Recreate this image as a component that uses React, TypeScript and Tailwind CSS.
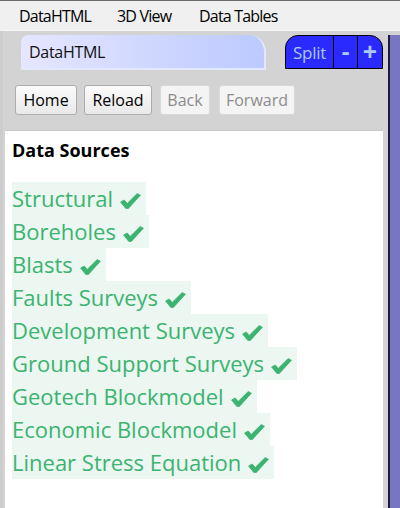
const sources = [
  'Structural',
  'Boreholes',
  'Blasts',
  'Faults Surveys',
  'Development Surveys',
  'Ground Support Surveys',
  'Geotech Blockmodel',
  'Economic Blockmodel',
  'Linear Stress Equation',
];

const font = { fontFamily: '"Open Sans", "Noto Sans", sans-serif' };

const NavButton = ({ label, width, disabled }: { label: string; width: string; disabled?: boolean }) => (
  <button
    className={`${width} h-[30px] rounded-[3px] border text-[16px] leading-none ${
      disabled
        ? 'border-[#d9d9d9] bg-[#f4f4f4] text-[#8c8c8c]'
        : 'border-[#adadad] bg-gradient-to-b from-[#fbfbfb] to-[#e9e9e9] text-black'
    }`}
  >
    {label}
  </button>
);

// heavy check mark, drawn to match the slanted brush tick in the screenshot
const Tick = () => (
  <svg width="21" height="16" viewBox="0 0 21 16" className="inline-block ml-[7px]">
    <polygon
      points="0.6,9 4.2,7 7.2,10.4 17.2,0.6 20.4,2.2 8.4,15.4 5.8,15.4"
      fill="#3cb371"
      stroke="#3cb371"
      strokeWidth="0.8"
      strokeLinejoin="round"
    />
  </svg>
);

export default function App() {
  return (
    <div className="w-[400px] h-[508px] overflow-hidden flex flex-col bg-[#d3d3d3]" style={font}>
      {/* MENU BAR */}
      <div className="h-[31px] shrink-0 border-t border-[#6b6b6b] border-b border-b-[#f8f8f8] bg-[#f0f0f0] flex items-center text-[16px] text-black tracking-[-0.8px]">
        <span className="ml-[19px] w-[98px]">DataHTML</span>
        <span className="w-[82px]">3D View</span>
        <span>Data Tables</span>
      </div>

      <div className="flex flex-1 min-h-0">
        {/* LEFT PANE */}
        <div className="w-[383px] flex flex-col border-l-[3px] border-[#cdcdcd]">
          {/* TABS */}
          <div className="flex items-end h-[39px] shrink-0">
            <div className="ml-[18px] w-[245px] h-[35px] rounded-tl-[7px] rounded-tr-[17px] bg-gradient-to-r from-[#e6e6ff] to-[#bccaff] border-r-2 border-b-2 border-[#e4e8ff] flex items-center pl-[8px] text-[16px] text-[#111] tracking-[-0.3px]">
              DataHTML
            </div>
            <div className="ml-[19px] w-[98px] h-[34px] mb-[1px] rounded-t-[13px] bg-[#2a2aff] border border-black flex text-[#a9caf7] leading-none">
              <div className="w-[48px] flex items-center justify-center text-[17px] tracking-[-0.3px] border-r border-black">
                Split
              </div>
              <div className="w-[24px] flex items-center justify-center text-[24px] font-bold border-r border-black pb-[3px]">
                -
              </div>
              <div className="flex-1 flex items-center justify-center text-[25px] font-bold pb-[2px]">
                +
              </div>
            </div>
          </div>

          {/* NAV BUTTONS */}
          <div className="flex items-center h-[60px] shrink-0 pl-[12px] pb-[1px]">
            <NavButton label="Home" width="w-[62px]" />
            <div className="w-[7px]" />
            <NavButton label="Reload" width="w-[68px]" />
            <div className="w-[8px]" />
            <NavButton label="Back" width="w-[50px]" disabled />
            <div className="w-[9px]" />
            <NavButton label="Forward" width="w-[76px]" disabled />
          </div>

          {/* CONTENT */}
          <div className="flex-1 ml-[2px] bg-white border-t border-[#c8c8c8] pl-[7px] pt-[7px]">
            <div className="text-[18px] font-bold text-black leading-[24px]">Data Sources</div>
            <div className="mt-[20px] flex flex-col items-start">
              {sources.map(s => (
                <span
                  key={s}
                  className="h-[33px] leading-[33px] text-[22px] text-[#3cb371] bg-[#ebf7f0] pr-[5px] whitespace-nowrap"
                >
                  {s}
                  <Tick />
                </span>
              ))}
            </div>
          </div>
        </div>

        {/* RIGHT PANEL */}
        <div className="w-[5px]" />
        <div className="flex-1 mt-[4px] bg-[#7876be] border-l-2 border-[#1a1a3a]" />
      </div>
    </div>
  );
}
